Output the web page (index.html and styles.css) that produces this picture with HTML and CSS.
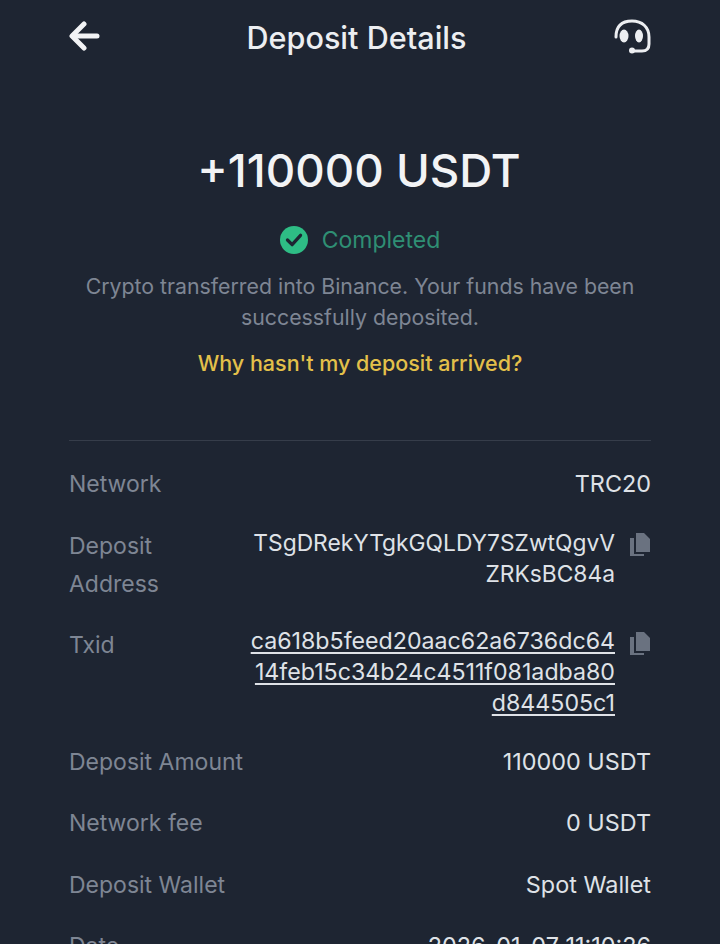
FILE: index.html
```html
<!DOCTYPE html>
<html lang="en">
<head>
    <meta charset="UTF-8">
    <meta name="viewport" content="width=device-width, initial-scale=1.0">
    <title>Deposit Details</title>
    <link rel="stylesheet" href="styles.css">
</head>
<body>
    <header class="topbar">
        <svg class="back" width="31" height="30" viewBox="0 0 31 30" fill="none" stroke="#f2f3f5" stroke-width="5" stroke-linecap="round" stroke-linejoin="round">
            <path d="M4 15H28"/>
            <path d="M15 3L3 15L15 27"/>
        </svg>
        <h1>Deposit Details</h1>
        <svg class="support" width="38" height="36" viewBox="0 0 38 36" fill="none">
            <path d="M3 19C3 8 9 3 19 3C29 3 36 9 36 19V26C36 31 33 33 29 33H20" stroke="#eceef1" stroke-width="3" stroke-linecap="round"/>
            <ellipse cx="11" cy="18" rx="4.500" ry="6.500" fill="#eceef1"/>
            <ellipse cx="26" cy="18" rx="4" ry="6.500" fill="#eceef1"/>
            <circle cx="19" cy="32.500" r="3" fill="#eceef1"/>
        </svg>
    </header>

    <section class="summary">
        <div class="amount">+110000 USDT</div>
        <div class="status">
            <svg width="28" height="28" viewBox="0 0 30 30" fill="none">
                <circle cx="15" cy="15" r="15" fill="#2ebd85"/>
                <path d="M8 15L13 20L22 10" stroke="#1e2532" stroke-width="3.500" stroke-linecap="round" stroke-linejoin="round"/>
            </svg>
            <span>Completed</span>
        </div>
        <p class="note">Crypto transferred into Binance. Your funds have been<br>successfully deposited.</p>
        <a class="why">Why hasn't my deposit arrived?</a>
    </section>

    <section class="details">
        <div class="row">
            <div class="label">Network</div>
            <div class="value">TRC20</div>
        </div>
        <div class="row">
            <div class="label narrow">Deposit Address</div>
            <div class="value with-copy">
                <div class="lines">TSgDRekYTgkGQLDY7SZwtQgvV<br>ZRKsBC84a</div>
                <svg class="copy" width="22" height="25" viewBox="0 0 22 25" fill="#6a7280">
                    <path d="M7 1H15L21 7V20H7Z"/>
                    <path d="M1 6H5V22H15V24H1Z"/>
                </svg>
            </div>
        </div>
        <div class="row">
            <div class="label">Txid</div>
            <div class="value with-copy">
                <div class="lines link">ca618b5feed20aac62a6736dc64<br>14feb15c34b24c4511f081adba80<br>d844505c1</div>
                <svg class="copy" width="22" height="25" viewBox="0 0 22 25" fill="#6a7280">
                    <path d="M7 1H15L21 7V20H7Z"/>
                    <path d="M1 6H5V22H15V24H1Z"/>
                </svg>
            </div>
        </div>
        <div class="row">
            <div class="label">Deposit Amount</div>
            <div class="value">110000 USDT</div>
        </div>
        <div class="row">
            <div class="label">Network fee</div>
            <div class="value">0 USDT</div>
        </div>
        <div class="row">
            <div class="label">Deposit Wallet</div>
            <div class="value">Spot Wallet</div>
        </div>
        <div class="row">
            <div class="label">Date</div>
            <div class="value">2026-01-07 11:10:26</div>
        </div>
    </section>
</body>
</html>
```

FILE: styles.css
```css
html, body {
    height: 944px;
    overflow: hidden;
}
body {
    margin: 0;
    padding: 0 69px;
    background: #1e2532;
    font-family: Inter, "Liberation Sans", sans-serif;
    color: #dfe2e7;
}
.topbar {
    display: flex;
    align-items: center;
    justify-content: space-between;
    height: 72px;
}
.topbar h1 {
    margin: 3px 0 0;
    font-size: 30.600px;
    font-weight: 500;
    color: #eceef1;
}
.summary {
    display: flex;
    flex-direction: column;
    align-items: center;
    border-bottom: 1px solid #363d4a;
    height: 368px;
}
.amount {
    margin-top: 73px;
    margin-right: 2px;
    font-size: 45.700px;
    line-height: 52px;
    font-weight: 500;
    color: #f2f3f5;
}
.status {
    display: flex;
    align-items: center;
    gap: 14px;
    margin-top: 29px;
    font-size: 23px;
    color: #2f8f74;
}
.note {
    margin: 17px 0 0;
    text-align: center;
    font-size: 21.300px;
    line-height: 31px;
    color: #7e8694;
}
.why {
    margin-top: 17px;
    font-size: 21.500px;
    font-weight: 500;
    color: #e3c04a;
}
.details {
    padding-top: 24px;
}
.row {
    display: flex;
    justify-content: space-between;
    margin-bottom: 23.500px;
    font-size: 23px;
    line-height: 38px;
}
.label {
    color: #7e8694;
}
.label.narrow {
    width: 130px;
}
.value {
    text-align: right;
    font-size: 23.400px;
    color: #dfe2e7;
}
.with-copy {
    display: flex;
    gap: 14px;
}
.lines {
    font-size: 22.800px;
    line-height: 31px;
}
.link {
    font-size: 23.200px;
    text-decoration: underline;
    text-underline-offset: 3px;
}
.copy {
    margin-top: 5px;
}
```
